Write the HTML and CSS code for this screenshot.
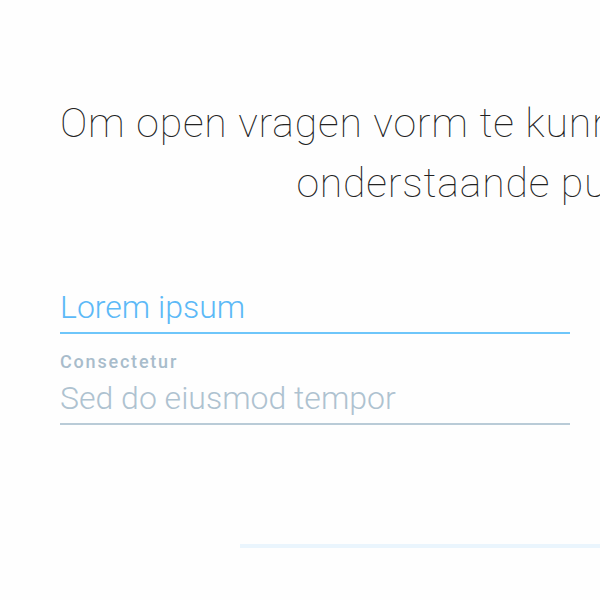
FILE: index.html
```html
<!DOCTYPE html>
<html lang="nl">
<head>
<meta charset="utf-8">
<title>Open vragen</title>
<link rel="stylesheet" href="styles.css">
</head>
<body>
<main class="page">
  <h1 class="intro">Om open vragen vorm te kunnen geven vul dan de<br>onderstaande punten in.</h1>
  <form class="form">
    <div class="field field-active">
      <div class="field-value">Lorem ipsum</div>
    </div>
    <div class="field">
      <div class="field-label">Consectetur</div>
      <div class="field-value">Sed do eiusmod tempor</div>
    </div>
  </form>
  <div class="footer-bar"></div>
</main>
</body>
</html>
```
FILE: styles.css
```css
html, body {
  margin: 0;
  padding: 0;
  background: #fefefe;
  overflow: hidden;
}
body {
  width: 600px;
  height: 600px;
  font-family: Roboto, "Liberation Sans", sans-serif;
}
.page {
  padding: 93px 0 0 60px;
}
.intro {
  width: max-content;
  margin: 0;
  font-size: 41px;
  font-weight: 100;
  line-height: 60px;
  letter-spacing: 0.8px;
  color: #222;
  text-align: center;
  white-space: nowrap;
}
.form {
  width: 510px;
  margin-top: 74px;
}
.field {
  border-bottom: 2px solid #b9cbd7;
  padding-bottom: 5px;
}
.field-active {
  border-bottom-color: #6ec6fa;
  margin-bottom: 17px;
}
.field-value {
  font-size: 32px;
  font-weight: 300;
  line-height: 40px;
  color: #aec2d0;
}
.field-active .field-value {
  color: #5cb9f7;
}
.field-label {
  font-size: 18px;
  font-weight: 500;
  line-height: 22px;
  letter-spacing: 1.8px;
  color: #a8bccb;
  margin-bottom: 5px;
}
.footer-bar {
  margin: 119px 0 0 180px;
  height: 4px;
  background: #eaf5fd;
}
```
